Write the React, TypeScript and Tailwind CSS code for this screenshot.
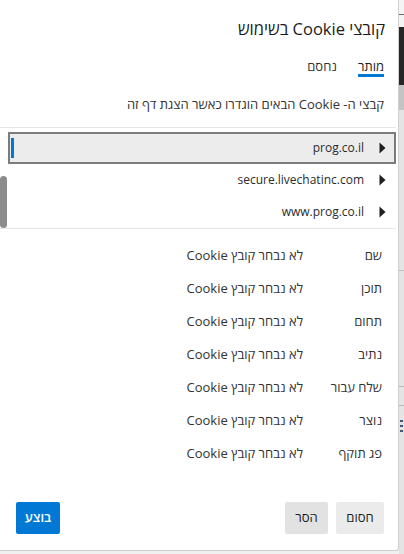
import React from "react";

function Arrow() {
  return (
    <svg width="7" height="12" viewBox="0 0 7 12" className="shrink-0">
      <path d="M0.5 0.5 L6.5 6 L0.5 11.5 Z" fill="#1f1f1f" />
    </svg>
  );
}

const sites = ["prog.co.il", "secure.livechatinc.com", "www.prog.co.il"];
const fields = ["שם", "תוכן", "תחום", "נתיב", "שלח עבור", "נוצר", "פג תוקף"];

export default function App() {
  return (
    <div className="w-[404px] h-[554px] flex overflow-hidden bg-[#ececec] font-['Open_Sans','Liberation_Sans','DejaVu_Sans',sans-serif]">
      <div className="w-[399px] h-[554px] flex flex-col shrink-0">
        <div
          dir="rtl"
          className="w-[399px] h-[551px] bg-white border-r border-b border-[#cfcfcf] rounded-br-[3px] flex flex-col text-[#1f1f1f]"
        >
          <div className="pr-[13px] pt-[19px] text-[16.5px] leading-[20px] text-[#1b1b1b]">
            קובצי Cookie בשימוש
          </div>
          <div className="pr-[14px] mt-[19px] flex gap-[21px] text-[13px]">
            <div className="flex flex-col items-stretch">
              <span className="leading-[16px] text-[#1b1b1b]">מותר</span>
              <span className="h-[3px] bg-[#0078d4]" />
            </div>
            <div className="flex flex-col">
              <span className="leading-[16px] text-[#333]">נחסם</span>
            </div>
          </div>
          <div className="pr-[14px] mt-[19px] text-[13px] leading-[17px] text-[#333]">
            קבצי ה- Cookie הבאים הוגדרו כאשר הצגת דף זה
          </div>
          <div className="mt-[14px] h-px bg-[#e6e6e6] mr-[2px]" />
          <div className="relative h-[100px] pt-[4px] flex flex-col">
            {sites.map((s, i) => (
              <div
                key={s}
                className={
                  i === 0
                    ? "relative mr-[2px] ml-[8px] h-[32px] border-2 border-[#7c7c7c] bg-[#ececec] flex items-center pr-[8px] gap-[15px] text-[12px] text-[#2b2b2b]"
                    : "mr-[2px] ml-[8px] h-[32px] flex items-center pr-[10px] gap-[15px] text-[12px] text-[#2b2b2b]"
                }
              >
                <Arrow />
                <span dir="ltr">{s}</span>
                {i === 0 && (
                  <span className="absolute left-[1px] top-[4px] w-[3px] h-[20px] bg-[#0078d4]" />
                )}
              </div>
            ))}
            <div className="absolute left-0 top-[48px] w-[7px] h-[52px] rounded-full bg-[#8c8c8c]" />
          </div>
          <div className="h-px bg-[#e6e6e6] mr-[2px]" />
          <div className="pt-[10px] flex flex-col text-[13px] text-[#333]">
            {fields.map((f) => (
              <div key={f} className="h-[33px] flex items-center pr-[16px]">
                <span className="w-[79px] shrink-0">{f}</span>
                <span>לא נבחר קובץ Cookie</span>
              </div>
            ))}
          </div>
          <div className="mt-auto pb-[16px] pr-[14px] pl-[16px] flex justify-between items-center text-[13px]">
            <div className="flex gap-[8px]">
              <button className="h-[32px] w-[48px] rounded-[2px] bg-[#ebebeb] text-[#1f1f1f]">חסום</button>
              <button className="h-[32px] w-[43px] rounded-[2px] bg-[#e2e2e2] text-[#1f1f1f]">הסר</button>
            </div>
            <button className="h-[32px] w-[44px] rounded-[2px] bg-[#0078d4] text-white font-semibold">בוצע</button>
          </div>
        </div>
        <div className="flex-1 bg-[#f0f0f0]" />
      </div>
      <div className="flex-1 flex flex-col">
        <div className="h-[14px] bg-[#f4f4f4]" />
        <div className="h-px bg-[#6a6a6a]" />
        <div className="h-[12px] bg-[#f4f4f4]" />
        <div className="h-[58px] bg-[#262626]" />
        <div className="h-[25px] bg-[#c4c4c4]" />
        <div className="h-[160px] bg-[#e4e4e4]" />
        <div className="h-px bg-[#c0c0c0]" />
        <div className="h-[115px] bg-[#e4e4e4]" />
        <div className="h-px bg-[#b8b8b8]" />
        <div className="h-[18px] bg-[#e4e4e4]" />
        <div className="h-px bg-[#b8b8b8]" />
        <div className="h-[14px] bg-[#e4e4e4]" />
        <div className="h-[16px] bg-[#e4e4e4] flex flex-col gap-[3px] pl-[1px]">
          <div className="h-[2px] w-[3px] bg-[#3a5a7a]" />
          <div className="h-[2px] w-[3px] bg-[#3a5a7a]" />
          <div className="h-[2px] w-[3px] bg-[#3a5a7a]" />
        </div>
        <div className="flex-1 bg-[#e4e4e4]" />
      </div>
    </div>
  );
}
